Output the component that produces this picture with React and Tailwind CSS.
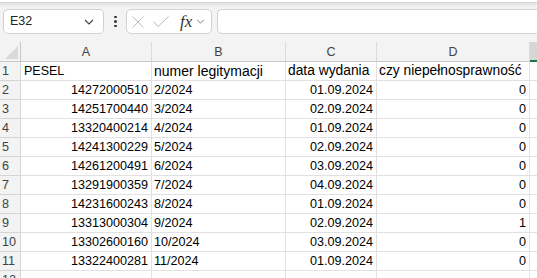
const rows = [
  ['14272000510', '2/2024', '01.09.2024', '0'],
  ['14251700440', '3/2024', '02.09.2024', '0'],
  ['13320400214', '4/2024', '01.09.2024', '0'],
  ['14241300229', '5/2024', '02.09.2024', '0'],
  ['14261200491', '6/2024', '03.09.2024', '0'],
  ['13291900359', '7/2024', '04.09.2024', '0'],
  ['14231600243', '8/2024', '01.09.2024', '0'],
  ['13313000304', '9/2024', '02.09.2024', '1'],
  ['13302600160', '10/2024', '03.09.2024', '0'],
  ['13322400281', '11/2024', '01.09.2024', '0'],
];

const gridCols = 'grid grid-cols-[21px_131px_134px_91px_153px_1fr]';
const cell = 'h-[19px] border-r border-b border-[#e1e1e1] bg-white leading-[18px] text-black overflow-hidden whitespace-nowrap';
const rowHead = 'h-[19px] border-r border-b border-[#d4d4d4] bg-[#f3f3f3] pl-[2px] text-[12.6px] leading-[19px] text-[#424242]';

function Chevron({ className }) {
  return (
    <svg viewBox="0 0 10 6" className={className} fill="none" stroke="currentColor" strokeWidth="1.1">
      <path d="M1 1l4 4 4-4" />
    </svg>
  );
}

export default function App() {
  return (
    <div className="h-[278px] w-[537px] overflow-hidden bg-[#f3f3f3] font-['Liberation_Sans',Arial,sans-serif]">
      {/* toolbar */}
      <div className="h-[3px] border-b border-[#d6d6d6] bg-white shadow-[0_2px_3px_rgba(0,0,0,0.08)]" />
      <div className="flex h-[39px] items-start pt-[6px]">
        <div className="ml-[3px] flex h-[25px] w-[101px] items-center justify-between rounded-[5px] border border-[#d1d1d1] bg-white pl-[6px] pr-[9px] text-[12.5px] text-[#242424]">
          <span>E32</span>
          <Chevron className="h-[6px] w-[10px] text-[#424242]" />
        </div>
        <div className="ml-[10px] flex h-[25px] w-[3px] flex-col items-center justify-center gap-[2px]">
          <span className="h-[2.5px] w-[2.5px] rounded-full bg-[#333]" />
          <span className="h-[2.5px] w-[2.5px] rounded-full bg-[#333]" />
          <span className="h-[2.5px] w-[2.5px] rounded-full bg-[#333]" />
        </div>
        <div className="ml-[9px] flex h-[25px] w-[86px] items-center rounded-[5px] border border-[#d1d1d1] bg-white pl-[5px]">
          <svg viewBox="0 0 12 12" className="h-[12px] w-[12px] text-[#b9b9b9]" fill="none" stroke="currentColor" strokeWidth="1">
            <path d="M0.5 0.5l11 11M11.5 0.5l-11 11" />
          </svg>
          <svg viewBox="0 0 16 11" className="ml-[9px] h-[11px] w-[16px] text-[#b9b9b9]" fill="none" stroke="currentColor" strokeWidth="1">
            <path d="M0.5 5.5l4.5 5 10.5-10" />
          </svg>
          <span className="ml-[11px] font-['Liberation_Serif',serif] text-[17px] italic leading-none text-[#333]">fx</span>
          <Chevron className="ml-[4px] h-[5px] w-[9px] text-[#707070]" />
        </div>
        <div className="ml-[5px] h-[25px] flex-1 rounded-l-[5px] border border-r-0 border-[#d1d1d1] bg-white" />
      </div>

      {/* column headers */}
      <div className={gridCols}>
        <div className="relative h-[20px] border-r border-b border-[#c8c8c8] bg-[#f3f3f3]">
          <svg viewBox="0 0 13 13" className="absolute left-[5px] top-[4px] h-[13px] w-[13px]">
            <path d="M13 0V13H0Z" fill="#d9d9d9" />
          </svg>
        </div>
        {['A', 'B', 'C', 'D'].map((l) => (
          <div key={l} className="h-[20px] border-r border-b border-r-[#dadada] border-b-[#c8c8c8] bg-[#f3f3f3] text-center text-[12.5px] leading-[20px] text-[#424242]">
            {l}
          </div>
        ))}
        <div className="h-[20px] border-b-2 border-[#217346] bg-[#d6d6d6]" />
      </div>

      {/* rows */}
      <div className={gridCols}>
        <div className={rowHead}>1</div>
        <div className={`${cell} pl-[3px] text-[12.5px]`}>PESEL</div>
        <div className={`${cell} pl-[2px] text-[14px]`}>numer legitymacji</div>
        <div className={`${cell} pl-[2px] text-[13.8px]`}>data wydania</div>
        <div className={`${cell} pl-[2px] text-[13.8px]`}>czy niepełnosprawność</div>
        <div className={`${cell} border-r-0`} />
        {rows.map((r, i) => (
          <div key={r[0]} className="contents">
            <div className={rowHead}>{i + 2}</div>
            <div className={`${cell} pr-[3px] text-right text-[12.6px]`}>{r[0]}</div>
            <div className={`${cell} pl-[2px] text-[12.6px]`}>{r[1]}</div>
            <div className={`${cell} pr-[3px] text-right text-[12.6px]`}>{r[2]}</div>
            <div className={`${cell} pr-[3px] text-right text-[12.6px]`}>{r[3]}</div>
            <div className={`${cell} border-r-0`} />
          </div>
        ))}
        <div className={rowHead}>12</div>
        <div className={cell} />
        <div className={cell} />
        <div className={cell} />
        <div className={cell} />
        <div className={`${cell} border-r-0`} />
      </div>
    </div>
  );
}
